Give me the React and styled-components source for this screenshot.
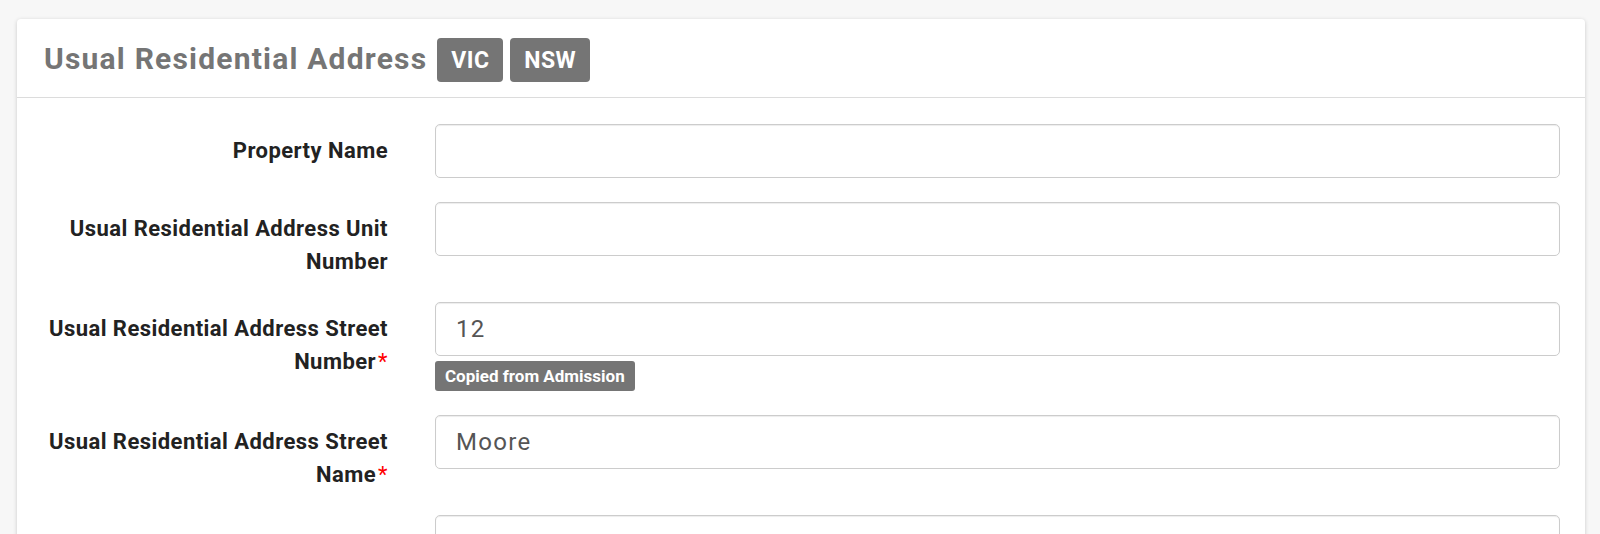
import React from "react";
import styled, { createGlobalStyle } from "styled-components";

const GlobalStyle = createGlobalStyle`
  html, body {
    margin: 0;
    padding: 0;
    background: #f7f7f7;
    font-family: Roboto, "Liberation Sans", sans-serif;
  }
  * {
    box-sizing: border-box;
  }
`;

const Page = styled.div`
  padding: 19px 15px 0 17px;
  height: 534px;
  overflow: hidden;
`;

const Card = styled.div`
  background: #fff;
  border-radius: 4px 4px 0 0;
  box-shadow: 0 1px 4px rgba(0, 0, 0, 0.18);
  min-height: 600px;
`;

const Header = styled.div`
  display: flex;
  align-items: center;
  height: 79px;
  padding: 0 26px 0 27px;
  border-bottom: 1px solid #dcdcdc;
`;

const Title = styled.h3`
  margin: 0 10px 0 0;
  font-size: 30px;
  font-weight: 700;
  color: #757575;
  letter-spacing: 1.2px;
`;

const Badge = styled.span`
  display: inline-flex;
  align-items: center;
  justify-content: center;
  height: 44px;
  padding: 0 14px;
  margin: 4px 7px 0 0;
  border-radius: 4px;
  background: #757575;
  color: #fff;
  font-size: 23px;
  font-weight: 700;
  letter-spacing: 0.4px;
`;

const Body = styled.div`
  padding: 26px 25px 0 16px;
`;

const Row = styled.div`
  display: grid;
  grid-template-columns: 355px 1fr;
  column-gap: 47px;
  margin-bottom: 24px;
`;

const Label = styled.label`
  min-height: 33px;
  padding-top: 11px;
  text-align: right;
  font-size: 22px;
  line-height: 32.5px;
  font-weight: 700;
  color: #222;
  letter-spacing: 0.45px;
`;

const Required = styled.span`
  color: #f00;
  margin-left: 2px;
  font-weight: 400;
`;

const Field = styled.div`
  display: flex;
  flex-direction: column;
  align-items: flex-start;
`;

const Input = styled.input`
  width: 100%;
  height: 54px;
  padding: 0 20px;
  border: 1px solid #ccc;
  border-radius: 5px;
  box-shadow: inset 0 1px 1px rgba(0, 0, 0, 0.075);
  font-family: Roboto, "Liberation Sans", sans-serif;
  font-size: 24px;
  letter-spacing: 1.3px;
  color: #555;
  background: #fff;
  outline: none;
`;

const Note = styled.span`
  margin-top: 5px;
  height: 30px;
  display: inline-flex;
  align-items: center;
  padding: 0 10px;
  border-radius: 3px;
  background: #757575;
  color: #fff;
  font-size: 17px;
  font-weight: 700;
`;

const fields = [
  { label: "Property Name", value: "" },
  { label: "Usual Residential Address Unit Number", value: "" },
  {
    label: "Usual Residential Address Street Number",
    value: "12",
    required: true,
    note: "Copied from Admission"
  },
  { label: "Usual Residential Address Street Name", value: "Moore", required: true },
  { label: "", value: "" }
];

const App = () => (
  <Page>
    <GlobalStyle />
    <Card>
      <Header>
        <Title>Usual Residential Address</Title>
        <Badge>VIC</Badge>
        <Badge>NSW</Badge>
      </Header>
      <Body>
        {fields.map((f, i) => (
          <Row key={i}>
            <Label>
              {f.label}
              {f.required && <Required>*</Required>}
            </Label>
            <Field>
              <Input defaultValue={f.value} />
              {f.note && <Note>{f.note}</Note>}
            </Field>
          </Row>
        ))}
      </Body>
    </Card>
  </Page>
);

export default App;
